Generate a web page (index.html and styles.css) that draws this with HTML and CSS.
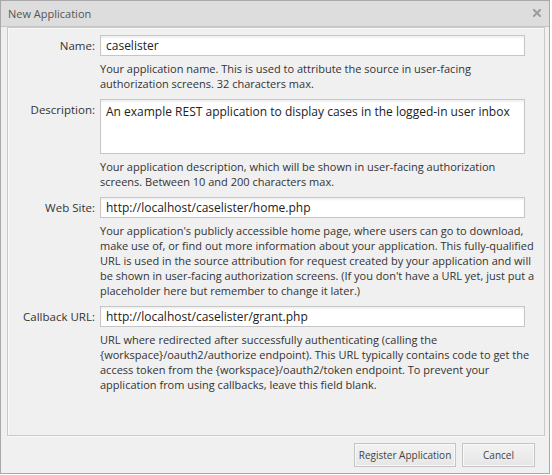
FILE: index.html
```html
<!DOCTYPE html>
<html>
<head>
<meta charset="utf-8">
<link rel="stylesheet" href="styles.css">
</head>
<body>
<div class="dialog">
  <div class="titlebar">
    <span class="title">New Application</span>
    <svg class="close" width="8" height="8" viewBox="0 0 8 8"><path d="M1 1 L7 7 M7 1 L1 7" stroke="#9c9c9c" stroke-width="2" stroke-linecap="square"/></svg>
  </div>
  <div class="panel">
    <div class="form">
      <label class="label">Name:</label>
      <div class="field">
        <div class="input">caselister</div>
        <p class="help">Your application name. This is used to attribute the source in user-facing authorization screens. 32 characters max.</p>
      </div>

      <label class="label">Description:</label>
      <div class="field">
        <div class="input textarea">An example REST application to display cases in the logged-in user inbox</div>
        <p class="help">Your application description, which will be shown in user-facing authorization screens. Between 10 and 200 characters max.</p>
      </div>

      <label class="label">Web Site:</label>
      <div class="field">
        <div class="input">http://localhost/caselister/home.php</div>
        <p class="help">Your application's publicly accessible home page, where users can go to download, make use of, or find out more information about your application. This fully-qualified URL is used in the source attribution for request created by your application and will be shown in user-facing authorization screens. (If you don't have a URL yet, just put a placeholder here but remember to change it later.)</p>
      </div>

      <label class="label">Callback URL:</label>
      <div class="field">
        <div class="input">http://localhost/caselister/grant.php</div>
        <p class="help">URL where redirected after successfully authenticating (calling the {workspace}/oauth2/authorize endpoint). This URL typically contains code to get the access token from the {workspace}/oauth2/token endpoint. To prevent your application from using callbacks, leave this field blank.</p>
      </div>
    </div>
  </div>
  <div class="footer">
    <button class="btn btn-register">Register Application</button>
    <button class="btn btn-cancel">Cancel</button>
  </div>
</div>
</body>
</html>
```
FILE: styles.css
```css
html, body {
  margin: 0;
  padding: 0;
  background: #ffffff;
}
body {
  font-family: "Open Sans", "DejaVu Sans", sans-serif;
  color: #333;
}
.dialog {
  box-sizing: border-box;
  width: 550px;
  height: 474px;
  border: 1px solid #a9a9a9;
  background: #f0f0f0;
  display: flex;
  flex-direction: column;
}
.titlebar {
  box-sizing: border-box;
  height: 26px;
  flex: none;
  background: #dddddd;
  border-bottom: 1px solid #c6c6c6;
  display: flex;
  align-items: center;
  justify-content: space-between;
  padding: 0 8px 1px 7px;
}
.title {
  font-size: 11px;
  color: #555;
}
.close {
  display: block;
  margin-right: 0;
}
.panel {
  box-sizing: border-box;
  margin: 0 4px 0 6px;
  height: 409px;
  border: 1px solid #c9c9c9;
  box-shadow: inset 1px 1px 0 #fafafa, 0 1px 0 #fafafa;
  background: #f0f0f0;
  padding: 7px 0 0 0;
}
.form {
  display: grid;
  grid-template-columns: 87px 436px;
  column-gap: 5px;
  row-gap: 8px;
}
.label {
  text-align: right;
  font-size: 11.5px;
  line-height: 21px;
  color: #333;
}
.field {
  display: flex;
  flex-direction: column;
}
.input {
  box-sizing: border-box;
  width: 425px;
  height: 21px;
  border: 1px solid #c6c6c6;
  background: #fff;
  box-shadow: inset 0 2px 2px rgba(0, 0, 0, 0.06);
  font-size: 12px;
  line-height: 19px;
  padding: 0 5px;
  color: #222;
  white-space: nowrap;
}
.textarea {
  height: 55px;
  padding-top: 3px;
  line-height: 18px;
}
.help {
  margin: 5px 0 0 0;
  font-size: 11px;
  line-height: 15px;
  color: #333;
}
.footer {
  flex: 1;
  display: flex;
  justify-content: flex-end;
  align-items: flex-start;
  gap: 6px;
  padding: 7px 14px 0 0;
}
.btn {
  box-sizing: border-box;
  height: 24px;
  border: 1px solid #c4c4c4;
  background: linear-gradient(#f2f2f2, #e6e6e6);
  box-shadow: inset 0 0 0 1px #f8f8f8;
  font-family: "Open Sans", "DejaVu Sans", sans-serif;
  font-size: 10px;
  color: #444;
  padding: 0;
  white-space: nowrap;
}
.btn-register { width: 102px; }
.btn-cancel { width: 73px; }
```
